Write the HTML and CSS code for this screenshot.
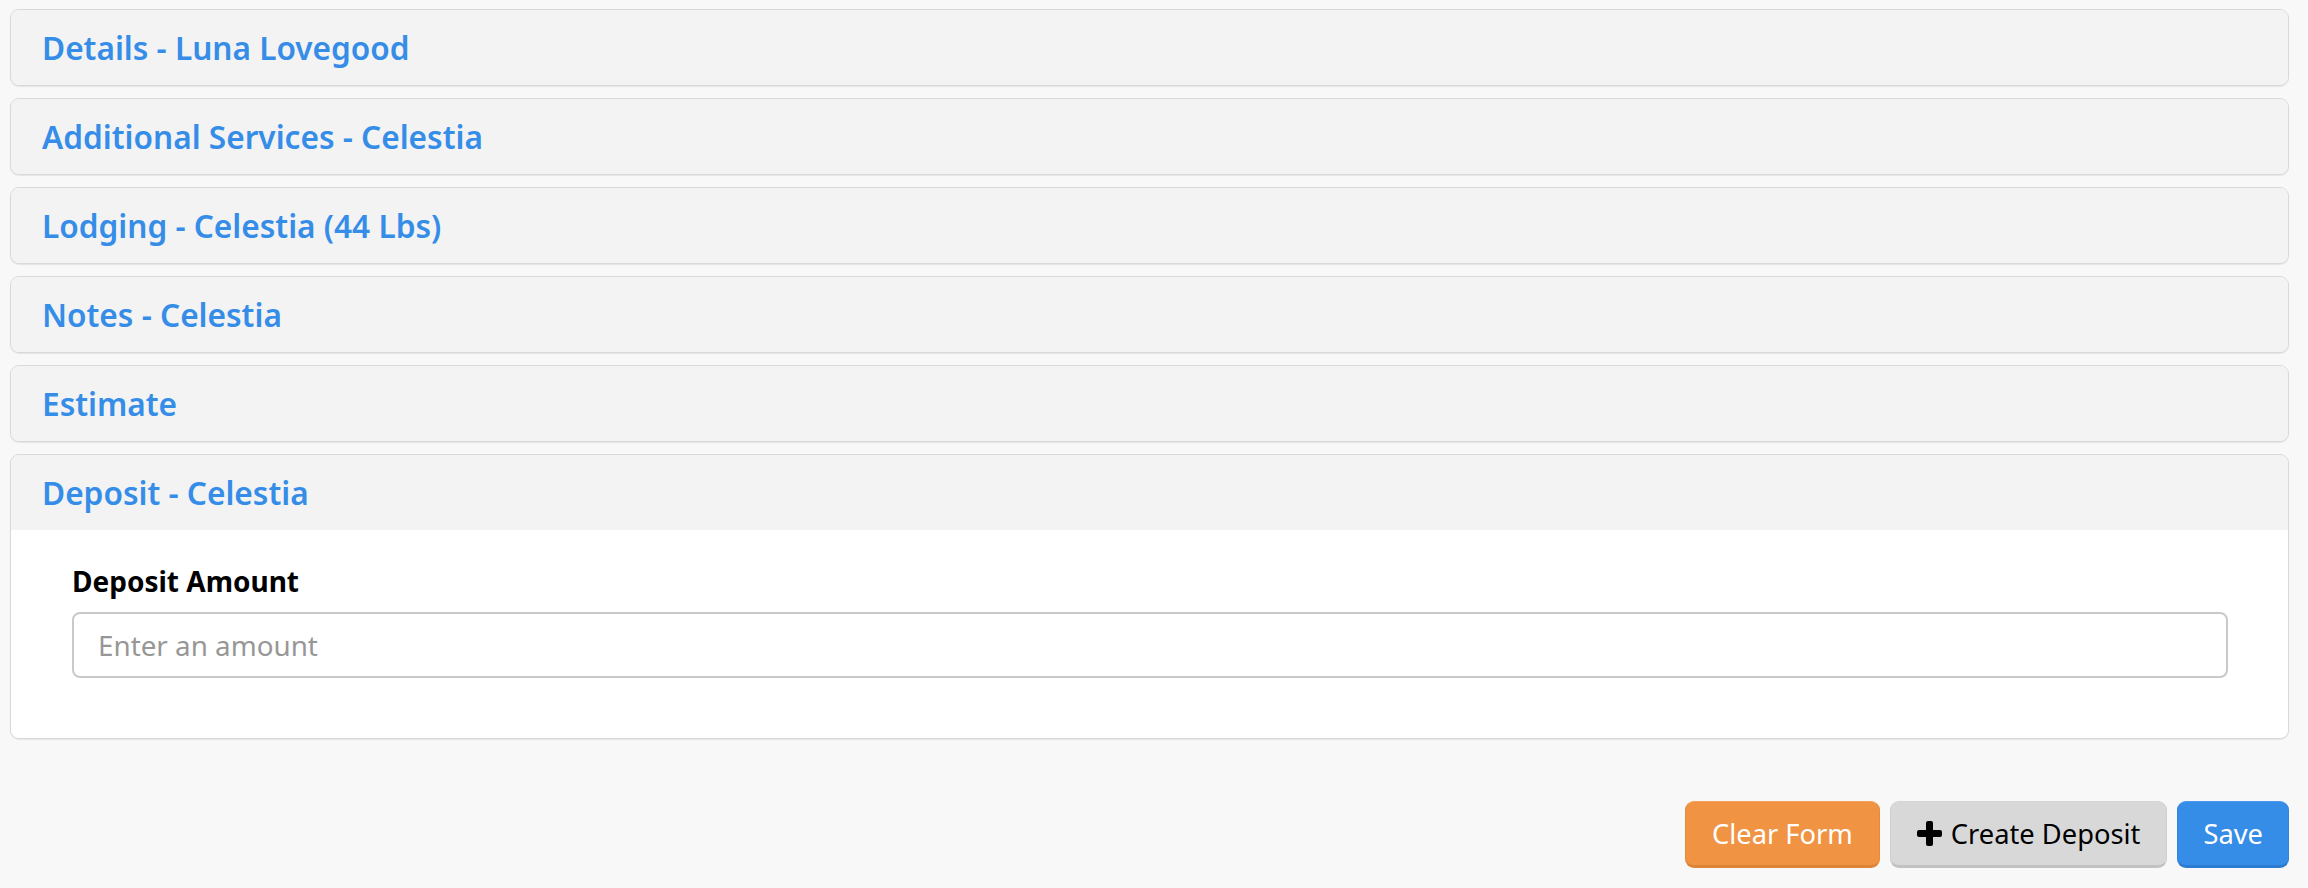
FILE: index.html
```html
<!DOCTYPE html>
<html lang="en">
<head>
<meta charset="utf-8">
<title>Deposit</title>
<link rel="stylesheet" href="styles.css">
</head>
<body>
<div class="page">
  <div class="panel"><div class="panel-header"><h2 class="panel-title">Details - Luna Lovegood</h2></div></div>
  <div class="panel"><div class="panel-header"><h2 class="panel-title">Additional Services - Celestia</h2></div></div>
  <div class="panel"><div class="panel-header"><h2 class="panel-title">Lodging - Celestia (44 Lbs)</h2></div></div>
  <div class="panel"><div class="panel-header"><h2 class="panel-title">Notes - Celestia</h2></div></div>
  <div class="panel"><div class="panel-header"><h2 class="panel-title">Estimate</h2></div></div>
  <div class="panel panel-open">
    <div class="panel-header"><h2 class="panel-title">Deposit - Celestia</h2></div>
    <div class="panel-body">
      <label class="field-label" for="amount">Deposit Amount</label>
      <input class="field-input" id="amount" type="text" placeholder="Enter an amount">
    </div>
  </div>
  <div class="actions">
    <button class="btn btn-orange" type="button">Clear Form</button>
    <button class="btn btn-gray" type="button"><svg class="plus" viewBox="0 0 25 25" width="25" height="25"><rect x="9" y="0" width="7" height="25" rx="2"/><rect x="0" y="9" width="25" height="7" rx="2"/></svg>Create Deposit</button>
    <button class="btn btn-blue btn-save" type="button">Save</button>
  </div>
</div>
</body>
</html>
```
FILE: styles.css
```css
html, body {
  margin: 0;
  padding: 0;
}
body {
  background: #f8f8f8;
  font-family: "Noto Sans", "Open Sans", "DejaVu Sans", sans-serif;
  color: #000;
}
.page {
  padding: 9px 19px 0 10px;
}
.panel {
  background: #f3f3f3;
  border: 1px solid #d9d9d9;
  border-radius: 9px;
  box-shadow: 0 1px 1px rgba(0, 0, 0, 0.08);
  margin-bottom: 12px;
  overflow: hidden;
}
.panel-header {
  height: 75px;
  display: flex;
  align-items: center;
  padding: 0 31px;
  background: #f3f3f3;
}
.panel-title {
  margin: 0;
  font-size: 31.6px;
  font-weight: 600;
  color: #358de8;
  line-height: 1;
}
.panel-open {
  margin-bottom: 0;
}
.panel-body {
  background: #fff;
  padding: 33px 60px 60px 61px;
  display: flex;
  flex-direction: column;
}
.field-label {
  font-size: 28px;
  line-height: 37px;
  font-weight: 700;
  color: #000;
  margin-bottom: 12px;
}
.field-input {
  box-sizing: border-box;
  height: 66px;
  width: 100%;
  border: 2px solid #c9c9c9;
  border-radius: 8px;
  padding: 0 24px;
  font-family: inherit;
  font-size: 27.8px;
  color: #333;
  background: #fff;
  outline: none;
}
.field-input::placeholder {
  color: #979797;
}
.actions {
  display: flex;
  justify-content: flex-end;
  gap: 10px;
  margin-top: 62px;
}
.btn {
  box-sizing: border-box;
  height: 67px;
  display: inline-flex;
  align-items: center;
  gap: 9px;
  padding: 0 26px;
  font-family: inherit;
  font-size: 27.3px;
  border-radius: 9px;
  border: 1px solid transparent;
  border-bottom-width: 3px;
  cursor: pointer;
}
.btn-save {
  padding: 0 25px;
}
.btn-orange {
  background: #f09443;
  border-color: #f3a25b #e78a3a #de8439;
  color: #fff;
}
.btn-gray {
  background: #d8d8d8;
  border-color: #d4d4d4 #d0d0d0 #c2c2c2;
  color: #000;
}
.btn-blue {
  background: #358de8;
  border-color: #4b99eb #2f84dd #2b7bd1;
  color: #fff;
}
.plus {
  fill: #000;
  flex: none;
}
```
